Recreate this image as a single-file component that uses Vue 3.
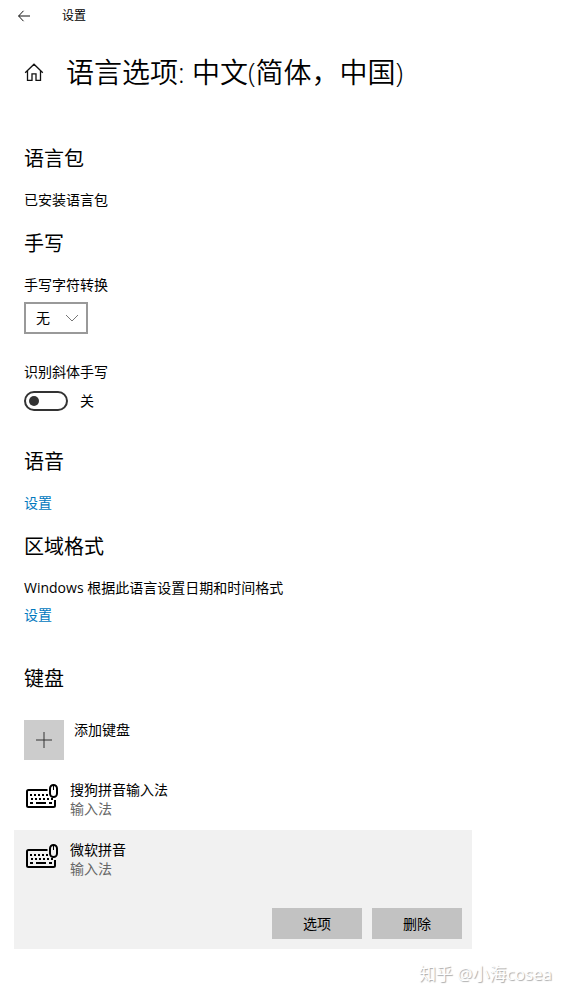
<script setup>
import { ref } from "vue";

const conversion = ref("无");
const cursive = ref(false);
const selected = ref("ms");

const keyboards = [
  { id: "sogou", name: "搜狗拼音输入法", type: "输入法" },
  { id: "ms", name: "微软拼音", type: "输入法" },
];
</script>

<template>
  <div class="window">
    <header class="titlebar">
      <button class="icon-btn" aria-label="返回">
        <svg width="14" height="12" viewBox="0 0 14 12">
          <path d="M5.500 .8.600 6l4.900 5.200M.600 6H12" />
        </svg>
      </button>
      <span>设置</span>
    </header>

    <div class="page-head">
      <button class="icon-btn home" aria-label="主页">
        <svg width="20" height="18" viewBox="0 0 20 18">
          <path d="M1.200 9.800 10 1.200l8.800 8.600M3.500 8v9.300H8v-6.500h4v6.500h4.500V8" />
        </svg>
      </button>
      <h1>语言选项: 中文(简体，中国)</h1>
    </div>

    <main>
      <section>
        <h2>语言包</h2>
        <p>已安装语言包</p>
      </section>

      <section>
        <h2>手写</h2>
        <label class="block" for="conversion">手写字符转换</label>
        <div class="select">
          <select id="conversion" v-model="conversion">
            <option>无</option>
          </select>
          <svg width="14" height="8" viewBox="0 0 14 8">
            <path d="M1 1l6 6 6-6" />
          </svg>
        </div>
        <label class="block cursive" for="cursive">识别斜体手写</label>
        <div class="toggle">
          <input id="cursive" v-model="cursive" type="checkbox" />
          <span>{{ cursive ? "开" : "关" }}</span>
        </div>
      </section>

      <section class="spaced">
        <h2>语音</h2>
        <a href="#">设置</a>
      </section>

      <section>
        <h2>区域格式</h2>
        <p>Windows 根据此语言设置日期和时间格式</p>
        <a class="below" href="#">设置</a>
      </section>

      <section class="keyboard-section">
        <h2>键盘</h2>
        <button class="add">
          <span class="tile">
            <svg width="16" height="16" viewBox="0 0 16 16">
              <path d="M8 0v16M0 8h16" />
            </svg>
          </span>
          <span>添加键盘</span>
        </button>

        <ul class="keyboards">
          <li
            v-for="kb in keyboards"
            :key="kb.id"
            :class="{ selected: kb.id === selected }"
            @click="selected = kb.id"
          >
            <div class="info">
              <svg width="32" height="26" viewBox="0 0 32 26">
                <path class="line" d="M21.500 6H2.500Q1 6 1 7.500v14Q1 23 2.500 23h25q1.500 0 1.500-1.500V16" />
                <rect class="line" x="24" y="1" width="7" height="12" rx="3.500" />
                <path class="line thin" d="M27.500 1v5" />
                <path
                  class="keys"
                  d="M4 11h2m2 0h2m2 0h2m2 0h2m2 0h2M5 15h2m2 0h2m2 0h2m2 0h2m2 0h2m2 0h2M4 19h3m3 0h10m3 0h3"
                />
              </svg>
              <div>
                <div>{{ kb.name }}</div>
                <div class="type">{{ kb.type }}</div>
              </div>
            </div>
            <div v-if="kb.id === selected" class="actions">
              <button>选项</button>
              <button>删除</button>
            </div>
          </li>
        </ul>
      </section>
    </main>

    <footer>知乎 @小海cosea</footer>
  </div>
</template>

<style>
body {
  margin: 0;
  background: #fff;
}
</style>

<style scoped>
.window {
  font: 14px/20px "Open Sans", "Noto Sans CJK SC", sans-serif;
  color: #000;
}

button,
select {
  font: inherit;
  color: inherit;
  border: 0;
  border-radius: 0;
  padding: 0;
  background: none;
}

svg {
  display: block;
  fill: none;
  stroke: #111;
}

h1,
h2,
p,
ul {
  margin: 0;
  padding: 0;
  font-weight: 400;
}

.titlebar {
  display: flex;
  align-items: center;
  gap: 30px;
  height: 32px;
  padding-left: 18px;
  font-size: 12px;
}

.page-head {
  display: flex;
  align-items: center;
  gap: 22px;
  height: 80px;
  padding-left: 24px;
}

.home svg {
  stroke-width: 1.3;
}

h1 {
  font-size: 28px;
  line-height: 40px;
  font-weight: 350;
}

main {
  padding: 33px 24px 0;
}

section + section {
  margin-top: 20px;
}

section + .spaced {
  margin-top: 37px;
}

section + .keyboard-section {
  margin-top: 40px;
}

h2 {
  margin-bottom: 17px;
  font-size: 20px;
  line-height: 28px;
}

.block {
  display: block;
}

.select {
  position: relative;
  width: 64px;
  margin-top: 7px;
}

.select select {
  display: block;
  box-sizing: border-box;
  width: 100%;
  height: 32px;
  padding-left: 10px;
  border: 2px solid #999;
  appearance: none;
}

.select svg {
  position: absolute;
  top: 12px;
  right: 9px;
  stroke: #777;
  pointer-events: none;
}

.cursive {
  margin-top: 28px;
}

.toggle {
  display: flex;
  align-items: center;
  gap: 12px;
  margin-top: 9px;
}

.toggle input {
  display: flex;
  align-items: center;
  box-sizing: border-box;
  width: 44px;
  height: 20px;
  margin: 0;
  padding: 0 3px;
  border: 2px solid #333;
  border-radius: 10px;
  appearance: none;
}

.toggle input::before {
  content: "";
  width: 10px;
  height: 10px;
  border-radius: 50%;
  background: #333;
}

.toggle input:checked {
  justify-content: flex-end;
}

a {
  display: block;
  width: fit-content;
  color: #0078be;
  text-decoration: none;
}

.below {
  margin-top: 7px;
}

.add {
  display: flex;
  gap: 10px;
  margin-top: 27px;
}

.tile {
  display: grid;
  place-items: center;
  width: 40px;
  height: 40px;
  background: #ccc;
}

.tile svg {
  stroke: #333;
}

.keyboards {
  max-width: 458px;
  margin: 10px 0 0 -10px;
  list-style: none;
}

.info {
  display: flex;
  gap: 12px;
  padding: 10px 12px 12px;
  line-height: 19px;
}

.info svg {
  margin-top: 4px;
}

.line {
  stroke: #000;
  stroke-width: 2;
}

.thin {
  stroke-width: 1;
}

.keys {
  stroke: #000;
  stroke-width: 2;
}

.type {
  color: #666;
}

.selected {
  background: #f1f1f1;
}

.actions {
  display: flex;
  justify-content: flex-end;
  gap: 10px;
  padding: 18px 10px 10px;
}

.actions button {
  width: 90px;
  height: 31px;
  background: #c2c2c2;
}

footer {
  padding: 14px 14px 0;
  font-size: 17px;
  line-height: 22px;
  text-align: right;
  color: #fff;
  text-shadow: 1px 1px 1px #aaa;
}
</style>
